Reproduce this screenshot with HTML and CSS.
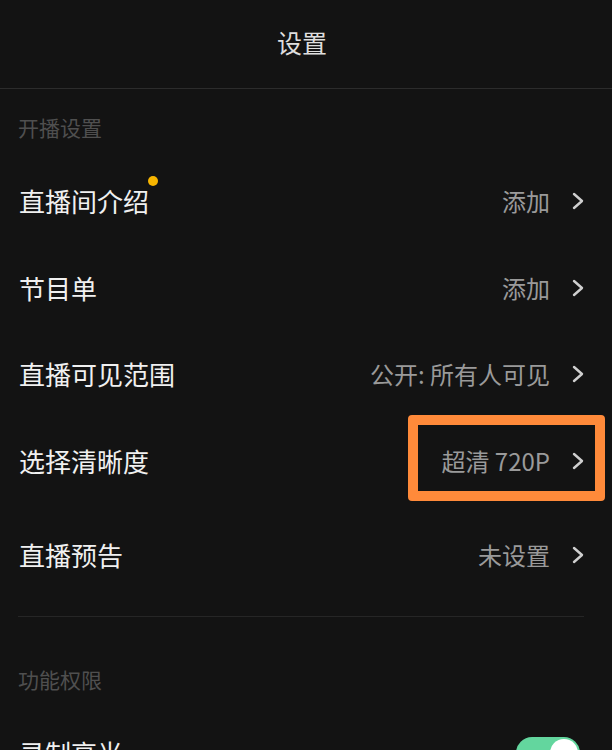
FILE: index.html
```html
<!DOCTYPE html>
<html lang="zh-CN">
<head>
<meta charset="utf-8">
<title>设置</title>
<link rel="stylesheet" href="styles.css">
</head>
<body>
<div class="page">
  <header class="topbar"><h1 class="title">设置</h1></header>

  <div class="section-title">开播设置</div>
  <div class="row">
    <span class="label"><span class="label-text">直播间介绍</span><span class="dot"></span></span>
    <span class="value">添加<svg class="chev" viewBox="0 0 12 18"><polyline points="2,2 10,9 2,16"/></svg></span>
  </div>
  <div class="row">
    <span class="label">节目单</span>
    <span class="value">添加<svg class="chev" viewBox="0 0 12 18"><polyline points="2,2 10,9 2,16"/></svg></span>
  </div>
  <div class="row">
    <span class="label">直播可见范围</span>
    <span class="value">公开: 所有人可见<svg class="chev" viewBox="0 0 12 18"><polyline points="2,2 10,9 2,16"/></svg></span>
  </div>
  <div class="row">
    <span class="label">选择清晰度</span>
    <span class="value">超清 720P<svg class="chev" viewBox="0 0 12 18"><polyline points="2,2 10,9 2,16"/></svg></span>
  </div>
  <div class="row row-last">
    <span class="label">直播预告</span>
    <span class="value">未设置<svg class="chev" viewBox="0 0 12 18"><polyline points="2,2 10,9 2,16"/></svg></span>
  </div>
  <div class="divider"></div>

  <div class="section-title section-title-2">功能权限</div>
  <div class="row">
    <span class="label">录制高光</span>
    <span class="toggle"><span class="knob"></span></span>
  </div>

  <div class="highlight"></div>
</div>
</body>
</html>
```
FILE: styles.css
```css
html, body {
  margin: 0;
  padding: 0;
  background: #131313;
  overflow: hidden;
}
body {
  font-family: "Noto Sans CJK SC", "Noto Sans", sans-serif;
  color: #eeeeee;
}
.page {
  position: relative;
  width: 612px;
  height: 750px;
  overflow: hidden;
}
.topbar {
  height: 88px;
  border-bottom: 1px solid #2c2c2c;
  display: flex;
  align-items: center;
  justify-content: center;
}
.title {
  margin: 0;
  font-size: 25px;
  font-weight: 400;
  line-height: 32px;
  color: #dedede;
  padding: 0 8px 4px 0;
}
.section-title {
  padding: 24px 18px 17px;
  font-size: 21px;
  line-height: 28px;
  color: #4f4f4f;
}
.section-title-2 {
  padding-top: 48px;
}
.row {
  height: 86.5px;
  display: flex;
  align-items: center;
  justify-content: space-between;
  padding: 0 28px 0 19px;
}
.row-last {
  margin-top: 8px;
}
.label {
  position: relative;
  font-size: 26px;
  line-height: 36px;
  color: #f0f0f0;
}
.dot {
  position: absolute;
  right: -9px;
  top: -7px;
  width: 10px;
  height: 10px;
  border-radius: 50%;
  background: #f7b500;
}
.value {
  display: flex;
  align-items: center;
  gap: 22px;
  font-size: 24px;
  line-height: 34px;
  color: #9a9a9a;
}
.chev {
  width: 12px;
  height: 18px;
  fill: none;
  stroke: #cfcfcf;
  stroke-width: 2.4;
  stroke-linecap: round;
  stroke-linejoin: round;
}
.divider {
  height: 1px;
  margin: 17px 28px 0 18px;
  background: #262626;
}
.toggle {
  position: relative;
  width: 64px;
  height: 32px;
  border-radius: 16px;
  background: #63d69e;
  margin-right: 4px;
}
.knob {
  position: absolute;
  right: 2px;
  top: 2px;
  width: 28px;
  height: 28px;
  border-radius: 50%;
  background: #ffffff;
}
.highlight {
  position: absolute;
  left: 408px;
  top: 415px;
  width: 177px;
  height: 66px;
  border: 10px solid #ff8a3a;
  border-radius: 4px;
}
```
